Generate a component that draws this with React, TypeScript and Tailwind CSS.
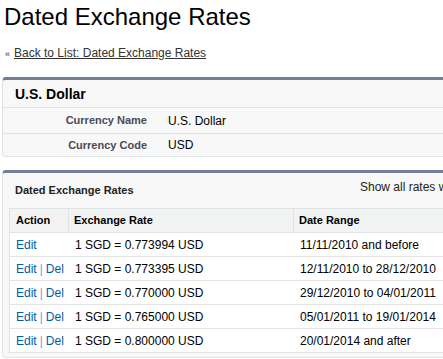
import React from "react";

const rows = [
  { del: false, rate: "1 SGD = 0.773994 USD", range: "11/11/2010 and before" },
  { del: true, rate: "1 SGD = 0.773395 USD", range: "12/11/2010 to 28/12/2010" },
  { del: true, rate: "1 SGD = 0.770000 USD", range: "29/12/2010 to 04/01/2011" },
  { del: true, rate: "1 SGD = 0.765000 USD", range: "05/01/2011 to 19/01/2014" },
  { del: true, rate: "1 SGD = 0.800000 USD", range: "20/01/2014 and after" },
];

export default function App() {
  return (
    <div className="w-[443px] h-[359px] overflow-hidden bg-white text-black font-['Liberation_Sans',Arial,sans-serif]">
      <h1 className="pl-[4px] pt-[3px] text-[24px] leading-[28px] font-normal whitespace-nowrap">
        Dated Exchange Rates
      </h1>
      <div className="mt-[14px] pl-[5px] flex items-baseline text-[12px] leading-[16px] whitespace-nowrap">
        <span className="text-[9px] mr-[4px] text-[#333]">«</span>
        <a href="#" className="underline text-[#333]">
          Back to List: Dated Exchange Rates
        </a>
      </div>

      {/* Detail panel */}
      <div className="mt-[15px] ml-[2px] w-[520px] bg-[#f8f8f8] border border-[#e0e3e5] border-t-[3px] border-t-[#747e96] rounded-[4px]">
        <div className="h-[28px] flex items-center pl-[12px] border-b border-[#e3e3e3]">
          <h2 className="text-[14px] font-bold leading-[16px]">U.S. Dollar</h2>
        </div>
        <div className="h-[26px] flex items-center border-b border-[#e3e3e3] text-[12px]">
          <div className="w-[154px] shrink-0 pr-[10px] text-right text-[11px] font-bold text-[#4a4a56]">Currency Name</div>
          <div className="pl-[11px]">U.S. Dollar</div>
        </div>
        <div className="h-[22px] flex items-center text-[12px]">
          <div className="w-[154px] shrink-0 pr-[10px] text-right text-[11px] font-bold text-[#4a4a56]">Currency Code</div>
          <div className="pl-[11px]">USD</div>
        </div>
      </div>

      {/* Related list */}
      <div className="mt-[13px] ml-[2px] w-[520px] bg-[#f8f8f8] border border-[#e0e3e5] border-t-[3px] border-t-[#747e96] rounded-[4px] pb-[4px]">
        <div className="h-[35px] flex items-start whitespace-nowrap">
          <h3 className="shrink-0 pl-[12px] pt-[11px] w-[357px] text-[11px] leading-[13px] font-bold text-[#222]">
            Dated Exchange Rates
          </h3>
          <div className="shrink-0 pt-[6px] text-[12px] leading-[16px] text-[#222]">Show all rates w</div>
        </div>
        <div className="ml-[6px] bg-white border-l border-[#e0e3e5] text-[12px] whitespace-nowrap">
          <div className="grid grid-cols-[59px_225px_1fr] h-[25px] bg-[#f2f3f3] border-y border-[#e0e3e5] text-[11px] font-bold">
            <div className="pl-[6px] flex items-center border-r border-[#e0e3e5]">Action</div>
            <div className="pl-[5px] flex items-center border-r border-[#e0e3e5]">Exchange Rate</div>
            <div className="pl-[5px] flex items-center">Date Range</div>
          </div>
          {rows.map((r, i) => (
            <div key={i} className="grid grid-cols-[59px_225px_1fr] h-[24px] border-b border-[#e3e3e3]">
              <div className="pl-[6px] flex items-center">
                <a href="#" className="text-[#015ba7]">Edit</a>
                {r.del && (
                  <>
                    <span className="mx-[3px] text-[#9b97b8]">|</span>
                    <a href="#" className="text-[#015ba7]">Del</a>
                  </>
                )}
              </div>
              <div className="pl-[6px] flex items-center">{r.rate}</div>
              <div className="pl-[6px] flex items-center">{r.range}</div>
            </div>
          ))}
        </div>
      </div>
    </div>
  );
}
